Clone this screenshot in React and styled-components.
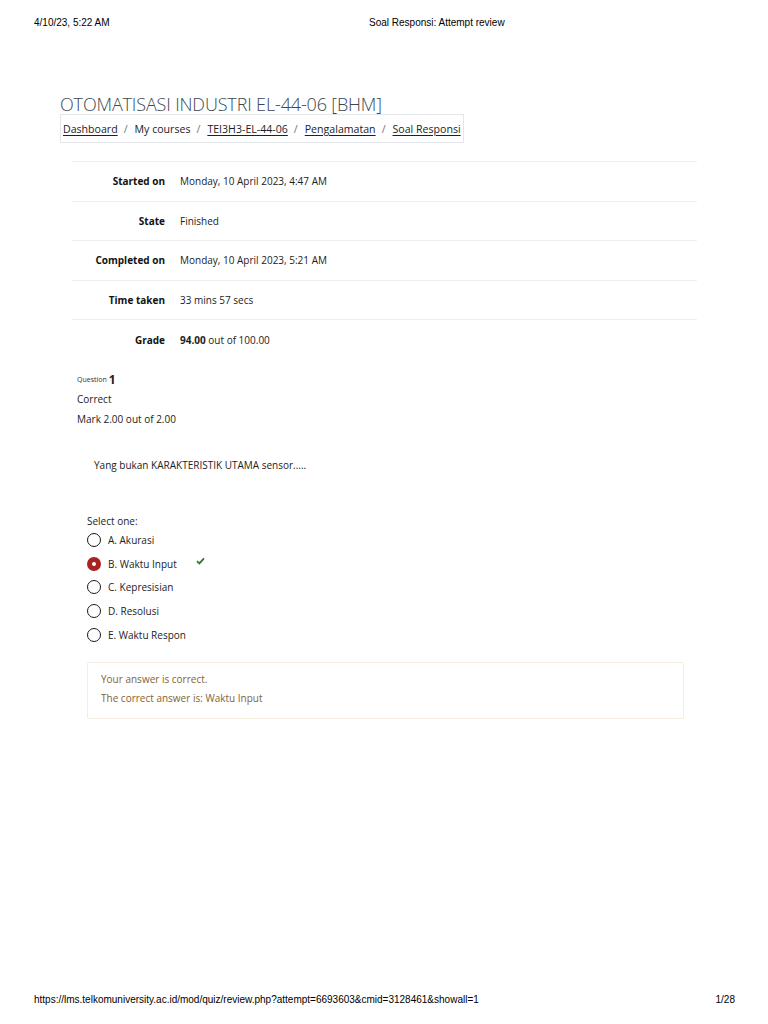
import React from "react";
import styled, { createGlobalStyle } from "styled-components";

const GlobalStyle = createGlobalStyle`
  html, body {
    margin: 0;
    padding: 0;
    background: #ffffff;
  }
  body {
    font-family: "Open Sans", "DejaVu Sans", sans-serif;
    color: #1d2125;
  }
`;

const Page = styled.div`
  width: 768px;
  min-height: 1024px;
  display: flex;
  flex-direction: column;
`;

const PrintBar = styled.div`
  display: grid;
  grid-template-columns: ${({ split }) => split};
  padding: 0 33px 0 34px;
  font-family: "Liberation Sans", Arial, sans-serif;
  font-size: 10px;
  line-height: 12px;
  color: #000;
`;

const PrintHeader = styled(PrintBar)`
  padding-top: 17px;
`;

const PrintFooter = styled(PrintBar)`
  margin-top: auto;
  padding-bottom: 18px;
`;

const Right = styled.span`
  text-align: right;
`;

const Main = styled.main`
  padding: 0 0 0 60px;
`;

const CourseTitle = styled.h1`
  margin: 65px 0 0;
  font-size: 18px;
  line-height: 20px;
  font-weight: 300;
  color: #3b4852;
  letter-spacing: -0.15px;
`;

const Crumbs = styled.nav`
  display: inline-flex;
  align-items: center;
  padding: 0 2px 0 2px;
  height: 27px;
  border: 1px solid #e4e7ea;
  font-size: 10.6px;
  color: #1d2125;
`;

const Crumb = styled.span`
  text-decoration: ${({ link }) => (link ? "underline" : "none")};
  text-underline-offset: 2px;
`;

const Sep = styled.span`
  color: #6a737b;
  padding: 0 7px 0 6px;
`;

const Summary = styled.div`
  margin: 18px 71px 0 12px;
  border-top: 1px solid #efefef;
`;

const Row = styled.div`
  display: grid;
  grid-template-columns: 93px 1fr;
  column-gap: 15px;
  align-items: center;
  height: 38.6px;
  border-bottom: ${({ last }) => (last ? "none" : "1px solid #efefef")};
  font-size: 10px;
`;

const Label = styled.div`
  text-align: right;
  font-weight: 700;
  color: #111;
`;

const Value = styled.div`
  color: #1d2125;
`;

const Info = styled.div`
  margin: 12px 0 0 17px;
  font-size: 10px;
  color: #1d2125;
`;

const QNo = styled.div`
  display: flex;
  align-items: center;
  gap: 2px;
  height: 18px;
  font-size: 7px;
  color: #333;
`;

const QNum = styled.span`
  font-size: 12px;
  font-weight: 700;
  color: #1d2125;
`;

const InfoLine = styled.div`
  line-height: 20px;
`;

const Formulation = styled.div`
  margin: 28px 0 0 27px;
`;

const QText = styled.p`
  margin: 0 0 0 7px;
  font-size: 10px;
  line-height: 16px;
`;

const Prompt = styled.div`
  margin-top: 41px;
  font-size: 10px;
  line-height: 14px;
`;

const Options = styled.div`
  display: flex;
  flex-direction: column;
`;

const Option = styled.label`
  display: flex;
  align-items: center;
  height: 23.7px;
  font-size: 10px;
`;

const Radio = styled.span`
  box-sizing: border-box;
  width: 14px;
  height: 14px;
  border-radius: 50%;
  margin-right: 7px;
  flex: none;
  display: flex;
  align-items: center;
  justify-content: center;
  border: ${({ checked }) => (checked ? "none" : "1.6px solid #1a1a1a")};
  background: ${({ checked }) => (checked ? "#a8231f" : "#fff")};
  &::after {
    content: "";
    display: ${({ checked }) => (checked ? "block" : "none")};
    width: 4px;
    height: 4px;
    border-radius: 50%;
    background: #fff;
  }
`;

const Check = styled.svg`
  margin-left: 19px;
  margin-top: -6px;
  width: 9px;
  height: 8px;
`;

const Feedback = styled.div`
  box-sizing: border-box;
  width: 597px;
  margin-top: 16px;
  padding: 7px 13px 10px;
  border: 1px solid #f5eddd;
  border-radius: 2px;
  color: #86622f;
  font-size: 10px;
  line-height: 19px;
`;

const options = [
  { text: "A. Akurasi" },
  { text: "B. Waktu Input", checked: true },
  { text: "C. Kepresisian" },
  { text: "D. Resolusi" },
  { text: "E. Waktu Respon" },
];

const summary = [
  { label: "Started on", value: "Monday, 10 April 2023, 4:47 AM" },
  { label: "State", value: "Finished" },
  { label: "Completed on", value: "Monday, 10 April 2023, 5:21 AM" },
  { label: "Time taken", value: "33 mins 57 secs" },
  {
    label: "Grade",
    value: (
      <>
        <b>94.00</b> out of 100.00
      </>
    ),
  },
];

export default function App() {
  return (
    <Page>
      <GlobalStyle />
      <PrintHeader split="335px 1fr">
        <span>4/10/23, 5:22 AM</span>
        <span>Soal Responsi: Attempt review</span>
      </PrintHeader>

      <Main>
        <CourseTitle>OTOMATISASI INDUSTRI EL-44-06 [BHM]</CourseTitle>
        <Crumbs>
          <Crumb link>Dashboard</Crumb>
          <Sep>/</Sep>
          <Crumb>My courses</Crumb>
          <Sep>/</Sep>
          <Crumb link>TEI3H3-EL-44-06</Crumb>
          <Sep>/</Sep>
          <Crumb link>Pengalamatan</Crumb>
          <Sep>/</Sep>
          <Crumb link>Soal Responsi</Crumb>
        </Crumbs>

        <Summary>
          {summary.map((r, i) => (
            <Row key={r.label} last={i === summary.length - 1}>
              <Label>{r.label}</Label>
              <Value>{r.value}</Value>
            </Row>
          ))}
        </Summary>

        <Info>
          <QNo>
            Question <QNum>1</QNum>
          </QNo>
          <InfoLine>Correct</InfoLine>
          <InfoLine>Mark 2.00 out of 2.00</InfoLine>
        </Info>

        <Formulation>
          <QText>Yang bukan KARAKTERISTIK UTAMA sensor.....</QText>
          <Prompt>Select one:</Prompt>
          <Options>
            {options.map((o) => (
              <Option key={o.text}>
                <Radio checked={o.checked} />
                {o.text}
                {o.checked && (
                  <Check viewBox="0 0 9 8">
                    <path
                      d="M1 4.2 L3.4 6.4 L8 1.4"
                      fill="none"
                      stroke="#2a7a2a"
                      strokeWidth="1.8"
                    />
                  </Check>
                )}
              </Option>
            ))}
          </Options>
          <Feedback>
            <div>Your answer is correct.</div>
            <div>The correct answer is: Waktu Input</div>
          </Feedback>
        </Formulation>
      </Main>

      <PrintFooter split="1fr auto">
        <span>
          https://lms.telkomuniversity.ac.id/mod/quiz/review.php?attempt=6693603&amp;cmid=3128461&amp;showall=1
        </span>
        <Right>1/28</Right>
      </PrintFooter>
    </Page>
  );
}
